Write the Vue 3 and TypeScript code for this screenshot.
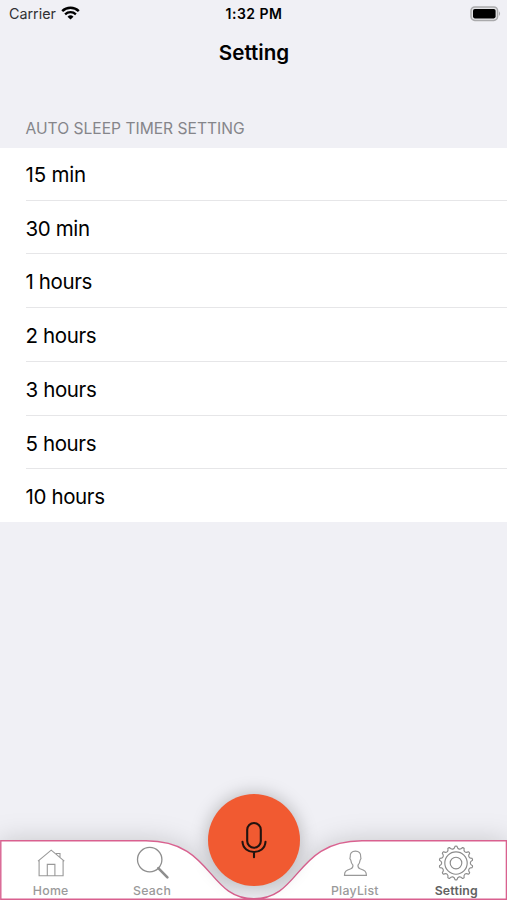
<script setup lang="ts">
const durations: string[] = ['15 min', '30 min', '1 hours', '2 hours', '3 hours', '5 hours', '10 hours']

// Outline of the cog: pointed teeth joined by shallow concave arcs.
function cogPath(teeth: number, outer: number, inner: number): string {
  const step = (Math.PI * 2) / teeth
  const at = (r: number, a: number) => `${(18 + r * Math.sin(a)).toFixed(2)} ${(18 - r * Math.cos(a)).toFixed(2)}`
  let d = `M${at(outer, -step * 0.13)}`
  for (let i = 0; i < teeth; i++) {
    const a = i * step
    d += `Q${at(outer + 0.5, a)} ${at(outer, a + step * 0.13)}`
    d += `C${at(inner, a + step * 0.28)} ${at(inner, a + step * 0.72)} ${at(outer, a + step * 0.87)}`
  }
  return d + 'Z'
}
const cog = cogPath(14, 16.7, 13.6)
</script>

<template>
  <main class="screen">
    <header class="status">
      <div class="carrier">
        <span class="carrier-name">Carrier</span>
        <svg class="wifi" width="19" height="14" viewBox="0 0 19 14">
          <path d="M1.2 5.2a12 12 0 0 1 16.6 0" fill="none" stroke="#000" stroke-width="2.5" />
          <path d="M4.1 8.3a7.8 7.8 0 0 1 10.8 0" fill="none" stroke="#000" stroke-width="2.3" />
          <path d="M9.5 13.6 6.5 10.7a4.4 4.4 0 0 1 6 0z" />
        </svg>
      </div>
      <span class="time">1:32 PM</span>
      <div class="battery">
        <svg width="32" height="16" viewBox="0 0 32 16">
          <rect x="1" y="1" width="26.6" height="13.4" rx="3.8" fill="#e3e3e6" stroke="#aaaaac" stroke-width="1.5" />
          <rect x="3" y="3" width="22.6" height="9.4" rx="1.8" />
          <path d="M29 5.3q2.2 2.3 0 4.7z" fill="#aaaaac" />
        </svg>
      </div>
    </header>
    <h1 class="title">Setting</h1>
    <h2 class="section">AUTO SLEEP TIMER SETTING</h2>
    <ul class="list">
      <li v-for="item in durations" :key="item" class="row"><span class="cell">{{ item }}</span></li>
    </ul>

    <nav class="tabbar">
      <svg class="bar-shape" width="507" height="60" viewBox="0 0 507 60">
        <path d="M.8 .8H146C213 .8 207 58.8 254 58.8S295 .8 362 .8H506.4V59.3H.8Z" fill="#fff" stroke="#d9618f" stroke-width="1.4" />
      </svg>
      <button class="tab">
        <svg class="icon" width="36" height="36" viewBox="0 0 36 36" fill="none" stroke="#999" stroke-width="1.1">
          <path d="M5 16.2 18.2 5.2 31.3 16.2M6.1 15.5V30.7H30.1V15.5M14.3 30.5V19.4H21.9V30.5M23.5 9.4V8.5H27V12.4" />
        </svg>
        <span class="label">Home</span>
      </button>
      <button class="tab">
        <svg class="icon" width="36" height="36" viewBox="0 0 36 36" fill="none" stroke="#8e8e8e">
          <circle cx="15.7" cy="14.6" r="12.2" stroke-width="1.3" />
          <path d="m24.3 23.2 9.1 9.1" stroke-width="2.6" stroke-linecap="round" />
        </svg>
        <span class="label">Seach</span>
      </button>
      <button class="mic" aria-label="Record">
        <svg width="30" height="40" viewBox="0 0 30 40" fill="none" stroke="#21130f" stroke-width="2.1" stroke-linecap="round">
          <rect x="8.2" y="3" width="13.6" height="24.8" rx="6.8" />
          <path d="M3.5 21.8C4.3 35.4 25.7 35.4 26.5 21.8M15 32V37.3" />
        </svg>
      </button>
      <button class="tab">
        <svg class="icon" width="36" height="36" viewBox="0 0 36 36" fill="none" stroke="#999" stroke-width="1.2">
          <path d="M7.5 30.3H29.4C29.4 26.3 27.8 25.4 23 23.8C21.2 23.2 20.8 22.4 21 20.1C22.3 18.7 22.9 17 23.1 15.2C24.4 13.8 24.1 12.8 23.7 12C24.2 8 21.8 6.2 18.4 6.2S12.7 8 13.2 12C12.7 12.8 12.5 13.8 13.8 15.2C14 17 14.6 18.7 15.9 20.1C16.1 22.4 15.7 23.2 13.9 23.8C9 25.4 7.5 26.3 7.5 30.3Z" />
        </svg>
        <span class="label">PlayList</span>
      </button>
      <button class="tab active">
        <svg class="icon" width="36" height="36" viewBox="0 0 36 36" fill="none" stroke="#8b8b8b" stroke-width="1.15">
          <path :d="cog" />
          <circle cx="18" cy="18" r="11.2" />
          <circle cx="18" cy="18" r="5.8" />
        </svg>
        <span class="label">Setting</span>
      </button>
    </nav>
  </main>
</template>

<style>
body {
  margin: 0;
  background: #f0f0f5;
}
</style>

<style scoped>
.screen {
  position: relative;
  display: flex;
  flex-direction: column;
  width: 507px;
  height: 900px;
  overflow: hidden;
  background: #f0f0f5;
  color: #000;
  font-family: Inter, "Liberation Sans", sans-serif;
}
.status {
  display: grid;
  grid-template-columns: 1fr auto 1fr;
  align-items: center;
  height: 27px;
  padding: 0 5px 0 6px;
}
.carrier {
  display: flex;
  align-items: center;
  gap: 5px;
  padding-left: 3px;
}
.carrier-name {
  font-size: 14.3px;
  line-height: 20px;
  color: #303033;
}
.wifi {
  margin-top: -2px;
}
.time {
  font-size: 14px;
  font-weight: 600;
  line-height: 20px;
  letter-spacing: 0.5px;
}
.battery {
  display: flex;
  justify-content: flex-end;
}
.title {
  margin: 11px 0 0;
  padding-left: 1px;
  font-size: 20.6px;
  line-height: 30px;
  font-weight: 600;
  text-align: center;
}
.section {
  margin: 51px 0 0 25.5px;
  font-size: 15.6px;
  line-height: 20px;
  height: 28.5px;
  font-weight: 400;
  color: #85858a;
}
.list {
  margin: 0;
  padding: 0;
  list-style: none;
  background: #fff;
}
.row {
  display: flex;
  padding-left: 25.5px;
}
.cell {
  flex: 1;
  box-sizing: border-box;
  height: 53.8px;
  border-bottom: 1px solid #e6e6e8;
  font-size: 20.5px;
  line-height: 55px;
  letter-spacing: -0.38px;
}
.row:first-child .cell {
  height: 53px;
  line-height: 53px;
  letter-spacing: -0.2px;
}
.row:last-child .cell {
  height: 52.2px;
  border-bottom: 0;
}
.tabbar {
  position: relative;
  display: grid;
  grid-template-columns: repeat(5, 101.4px);
  height: 60px;
  margin-top: auto;
}
.bar-shape {
  position: absolute;
  inset: 0;
  overflow: visible;
  filter: drop-shadow(0 0 13px rgba(0, 0, 0, 0.17));
}
.tab,
.mic {
  border: 0;
  padding: 0;
  font-family: inherit;
}
.tab {
  position: relative;
  display: flex;
  flex-direction: column;
  align-items: center;
  padding-top: 5px;
  background: none;
}
.label {
  margin-top: 2px;
  font-size: 12.3px;
  font-weight: 500;
  line-height: 16px;
  letter-spacing: 0.25px;
  color: #9a9a9a;
}
.active .label {
  color: #626262;
  font-weight: 600;
  letter-spacing: 0.15px;
}
.mic {
  position: relative;
  display: flex;
  align-items: center;
  justify-content: center;
  justify-self: center;
  width: 92px;
  height: 92px;
  margin: -46px -0.5px 0 0.5px;
  border-radius: 50%;
  background: #f15a31;
  box-shadow: 0 0 18px rgba(0, 0, 0, 0.26);
}
</style>
